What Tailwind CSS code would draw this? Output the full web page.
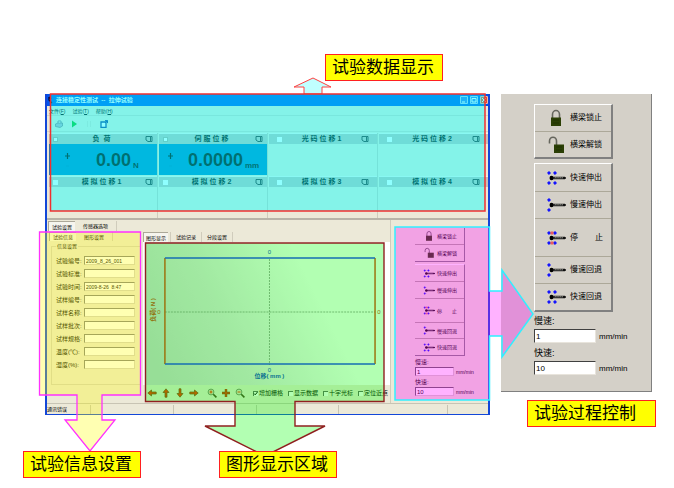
<!DOCTYPE html>
<html lang="zh-CN">
<head>
    <meta charset="UTF-8">
    <meta name="viewport" content="width=device-width, initial-scale=1.0">
    <title>拉伸试验</title>
    <script src="https://cdn.jsdelivr.net/npm/@tailwindcss/browser@4"></script>
</head>
<body class="bg-white text-black font-['Liberation_Sans','Noto_Sans_CJK_SC',sans-serif]">

    <!-- Shared icons -->
    <svg class="hidden" aria-hidden="true">
        <symbol id="lock" viewBox="0 0 20 18">
            <path d="M6.5 9V5.5a3.5 4 0 0 1 7 0V9" fill="none" stroke="#66665e" stroke-width="1.6"/>
            <rect x="5" y="8.5" width="10" height="8.5" fill="#2b3f05"/>
            <path d="M7 11h6M7 14h6" stroke="#1a2800" stroke-width=".6"/>
        </symbol>
        <symbol id="unlock" viewBox="0 0 20 18">
            <path d="M3.5 7.5V5a3.5 3.8 0 0 1 7 0v4" fill="none" stroke="#66665e" stroke-width="1.6"/>
            <rect x="8" y="8.5" width="10" height="8.5" fill="#2b3f05"/>
            <path d="M10 11h6M10 14h6" stroke="#1a2800" stroke-width=".6"/>
        </symbol>
        <symbol id="rod" viewBox="0 0 20 14">
            <path d="M6 7h13" stroke="#333" stroke-width="2.6"/>
            <path d="M9 6.6h8" stroke="#8a8a80" stroke-width=".8" stroke-dasharray="1.5 .8"/>
            <ellipse cx="5.5" cy="7" rx="2" ry="2.2" fill="#000"/>
            <path d="M17 7h3" stroke="#000" stroke-width="1.4"/>
        </symbol>
        <symbol id="slow" viewBox="0 0 20 14">
            <use href="#rod"/>
            <path d="M3 .3 4.7 2 3 3.7 1.3 2ZM3 10.3 4.7 12 3 13.7 1.3 12Z" fill="#1010ff" stroke="#1010ff" stroke-width=".5"/>
        </symbol>
        <symbol id="fast" viewBox="0 0 20 14">
            <use href="#slow"/>
            <path d="M9 .3 10.7 2 9 3.7 7.3 2ZM9 10.3 10.7 12 9 13.7 7.3 12Z" fill="#1010ff" stroke="#1010ff" stroke-width=".5"/>
        </symbol>
        <symbol id="stop" viewBox="0 0 20 14">
            <use href="#fast"/>
            <path d="M5.2 .5v3M6.8 .5v3M5.2 10.5v3M6.8 10.5v3" stroke="#f04040" stroke-width="1.2"/>
        </symbol>
        <symbol id="arrow" viewBox="0 0 10 10">
            <path d="M.8 5 4.5 2v2H9.2v2H4.5v2Z" fill="#ff2800" stroke="#803010" stroke-width=".7"/>
        </symbol>
        <symbol id="zoom" viewBox="0 0 10 10">
            <path d="m6 6 3.4 3.4" stroke="#4a3a20" stroke-width="1.6"/>
            <circle cx="4" cy="4" r="2.9" fill="#e8e0d0" stroke="#6a6a5a" stroke-width=".8"/>
        </symbol>
        <symbol id="copy" viewBox="0 0 8 8">
            <path d="M1 1.5h4.5v5H3L1 5ZM5.5 1.5H7v5H5.5" fill="none" stroke="#222" stroke-width=".9"/>
        </symbol>
    </svg>

    <main class="relative max-w-[674px] min-h-[488px]">
        <div class="flex items-start gap-[11px] pt-[94px] pl-[45px] pr-[22px]">

            <!-- Application window -->
            <section class="flex-1 min-w-0 bg-[#ece9d8] border-x-2 border-b border-[#1347d8] text-[5px] leading-[8px]">
                <header class="flex items-center h-3 bg-[#0054ed] text-white text-[6px] pl-px pr-0">
                    <svg class="w-2 h-2" viewBox="0 0 8 8"><path d="M1 1v3l3 3M1 1l2 2" stroke="#002" stroke-width="1.2" fill="none"/></svg>
                    <h1 class="flex-1 font-bold">连接稳定性测试 &nbsp;--&nbsp; 拉伸试验</h1>
                    <button aria-label="最小化" class="w-2 h-2 mr-[2px] rounded-[1px] border border-white/60 bg-[#3c78f0]"><svg viewBox="0 0 6 6"><path d="M1 5h3" stroke="#fff"/></svg></button>
                    <button aria-label="最大化" class="w-2 h-2 mr-[2px] rounded-[1px] border border-white/60 bg-[#3c78f0]"><svg viewBox="0 0 6 6"><path d="M1 1.5h4v3.5h-4z" fill="none" stroke="#fff"/></svg></button>
                    <button aria-label="关闭" class="w-2 h-2 rounded-[1px] border border-white/60 bg-[#e0502c]"><svg viewBox="0 0 6 6"><path d="m1 1 4 4M5 1 1 5" stroke="#fff"/></svg></button>
                </header>
                <nav class="flex items-center gap-[7px] h-[9px] pl-[2px]">
                    <a href="#">文件(<u>F</u>)</a>
                    <a href="#">试验(<u>T</u>)</a>
                    <a href="#">帮助(<u>H</u>)</a>
                </nav>
                <div class="flex items-center gap-[7px] h-[17px] pl-2 border-y border-[#d8d4c4]">
                    <button aria-label="打印"><svg class="w-2 h-2" viewBox="0 0 8 8"><path d="M3 3V1h3v2" fill="#fff" stroke="#889"/><path d="M.5 4 3 3h4.500v3L5 7.500.5 6.500z" fill="#b8b4c8" stroke="#667" stroke-width=".6"/></svg></button>
                    <button aria-label="开始"><svg class="w-2 h-2" viewBox="0 0 8 8"><path d="M2 .5 7 4 2 7.500Z" fill="#10c020"/></svg></button>
                    <button aria-label="暂停"><svg class="w-2 h-2" viewBox="0 0 8 8"><path d="M2.500 1v6M5.500 1v6" stroke="#dedac8"/></svg></button>
                    <button aria-label="新窗口"><svg class="w-2 h-2" viewBox="0 0 8 8"><path d="M1 2h5v5.300H1z" fill="#fff" stroke="#123a9a" stroke-width="1.300"/><path d="M5 3 7.500.6M5 .6h2.500v2.500" stroke="#123a9a" fill="none"/></svg></button>
                </div>

                <!-- Channel readouts -->
                <div class="grid grid-cols-4 gap-x-px pl-[2px] pt-px border-b-2 border-[#b8b4a8] bg-[#ece9d8]">
                    <article class="border-r border-[#d0ccbc]">
                        <div class="flex items-center h-[11px] px-1 bg-[#c6c0ba] border-t border-[#f4f2ea]">
                            <input type="checkbox" checked aria-label="负荷" class="appearance-none w-[5px] h-[5px] bg-white border border-[#b0aca0]">
                            <h2 class="flex-1 text-center text-[7px] leading-[10px] font-bold">负 &nbsp;荷</h2>
                            <svg class="w-2 h-2"><use href="#copy"/></svg>
                        </div>
                        <div class="flex items-center h-[31px] bg-[#0080c8] pl-4">
                            <svg class="w-[5px] h-5" viewBox="0 0 5 20"><path d="M0 6h5M2.500 3v6" stroke="#000" stroke-width="1.200"/><path d="M1 16h3" stroke="#0078b8"/></svg>
                            <p class="flex-1 text-right text-[18px] leading-[28px] font-bold">0.00</p>
                            <span class="w-[26px] pl-[2px] pt-3 text-[8px] font-bold">N</span>
                        </div>
                    </article>
                    <article class="border-r border-[#d0ccbc]">
                        <div class="flex items-center h-[11px] px-1 bg-[#c6c0ba] border-t border-[#f4f2ea]">
                            <input type="checkbox" checked aria-label="伺服位移" class="appearance-none w-[5px] h-[5px] bg-white border border-[#b0aca0]">
                            <h2 class="flex-1 text-center text-[7px] leading-[10px] font-bold">伺 服 位 移</h2>
                            <svg class="w-2 h-2"><use href="#copy"/></svg>
                        </div>
                        <div class="flex items-center h-[31px] bg-[#0080c8] pl-[9px]">
                            <svg class="w-[5px] h-5" viewBox="0 0 5 20"><path d="M0 6h5M2.500 3v6" stroke="#000" stroke-width="1.200"/><path d="M1 16h3" stroke="#0078b8"/></svg>
                            <p class="flex-1 text-right text-[18px] leading-[28px] font-bold">0.0000</p>
                            <span class="w-[24px] pl-[2px] pt-3 text-[8px] font-bold">mm</span>
                        </div>
                    </article>
                    <article class="border-r border-[#d0ccbc]">
                        <div class="flex items-center h-[11px] px-2 bg-[#c6c0ba] border-t border-[#f4f2ea]">
                            <input type="checkbox" aria-label="光码位移1" class="appearance-none w-[5px] h-[5px] bg-white">
                            <h2 class="flex-1 text-center text-[7px] leading-[10px] font-bold">光 码 位 移 1</h2>
                            <svg class="w-2 h-2"><use href="#copy"/></svg>
                        </div>
                    </article>
                    <article>
                        <div class="flex items-center h-[11px] px-2 bg-[#c6c0ba] border-t border-[#f4f2ea]">
                            <input type="checkbox" aria-label="光码位移2" class="appearance-none w-[5px] h-[5px] bg-white">
                            <h2 class="flex-1 text-center text-[7px] leading-[10px] font-bold">光 码 位 移 2</h2>
                            <svg class="w-2 h-2"><use href="#copy"/></svg>
                        </div>
                    </article>
                    <article class="h-[43px] pt-px border-r border-[#d0ccbc]">
                        <div class="flex items-center h-[11px] px-1 bg-[#c6c0ba] border-t border-[#f4f2ea]">
                            <input type="checkbox" aria-label="模拟位移1" class="appearance-none w-[5px] h-[5px] bg-white">
                            <h2 class="flex-1 text-center text-[7px] leading-[10px] font-bold">模 拟 位 移 1</h2>
                            <svg class="w-2 h-2"><use href="#copy"/></svg>
                        </div>
                    </article>
                    <article class="h-[43px] pt-px border-r border-[#d0ccbc]">
                        <div class="flex items-center h-[11px] px-1 bg-[#c6c0ba] border-t border-[#f4f2ea]">
                            <input type="checkbox" aria-label="模拟位移2" class="appearance-none w-[5px] h-[5px] bg-white">
                            <h2 class="flex-1 text-center text-[7px] leading-[10px] font-bold">模 拟 位 移 2</h2>
                            <svg class="w-2 h-2"><use href="#copy"/></svg>
                        </div>
                    </article>
                    <article class="h-[43px] pt-px border-r border-[#d0ccbc]">
                        <div class="flex items-center h-[11px] px-2 bg-[#c6c0ba] border-t border-[#f4f2ea]">
                            <input type="checkbox" aria-label="模拟位移3" class="appearance-none w-[5px] h-[5px] bg-white">
                            <h2 class="flex-1 text-center text-[7px] leading-[10px] font-bold">模 拟 位 移 3</h2>
                            <svg class="w-2 h-2"><use href="#copy"/></svg>
                        </div>
                    </article>
                    <article class="h-[43px] pt-px">
                        <div class="flex items-center h-[11px] px-2 bg-[#c6c0ba] border-t border-[#f4f2ea]">
                            <input type="checkbox" aria-label="模拟位移4" class="appearance-none w-[5px] h-[5px] bg-white">
                            <h2 class="flex-1 text-center text-[7px] leading-[10px] font-bold">模 拟 位 移 4</h2>
                            <svg class="w-2 h-2"><use href="#copy"/></svg>
                        </div>
                    </article>
                </div>

                <div class="flex h-[183px]">
                    <div class="flex-1 min-w-0">
                        <nav class="flex h-[11px] pl-px pt-px">
                            <button class="px-[3px] bg-[#f6f5ee] border-l border-t border-[#aca899]">试验设置</button>
                            <button class="px-2 border-r border-[#d0ccbc]">传感器选项</button>
                        </nav>
                        <div class="flex h-[172px]">
                            <!-- Test information -->
                            <form class="w-[96px] pl-[2px]">
                                <nav class="flex h-[10px] pt-px">
                                    <button type="button" class="px-[3px] bg-[#f6f5ee] border-l border-t border-[#aca899]">试验信息</button>
                                    <button type="button" class="px-2 border-r border-[#d0ccbc]">图形设置</button>
                                </nav>
                                <fieldset class="mx-[2px] mt-px h-[143px] border border-[#d4d0c0] px-1 text-[6px]">
                                    <legend class="px-px text-[5px] leading-[8px]">信息设置</legend>
                                    <div class="grid grid-cols-[28px_1fr] auto-rows-[9px] gap-y-[4px] items-center pt-[6px] pr-px whitespace-nowrap">
                                        <label for="no">试验编号:</label>
                                        <input id="no" value="2009_8_26_001" class="w-full h-[9px] px-px text-[5px] bg-white border border-[#d4d0c8] border-t-[#808080] border-l-[#808080]">
                                        <label for="std">试验标准:</label>
                                        <input id="std" class="w-full h-[9px] px-px text-[5px] bg-white border border-[#d4d0c8] border-t-[#808080] border-l-[#808080]">
                                        <label for="time">试验时间:</label>
                                        <input id="time" value="2009-8-26  8:47" class="w-full h-[9px] px-px text-[5px] bg-white border border-[#d4d0c8] border-t-[#808080] border-l-[#808080]">
                                        <label for="sno">试样编号:</label>
                                        <input id="sno" class="w-full h-[9px] px-px text-[5px] bg-white border border-[#d4d0c8] border-t-[#808080] border-l-[#808080]">
                                        <label for="name">试样名称:</label>
                                        <input id="name" class="w-full h-[9px] px-px text-[5px] bg-white border border-[#d4d0c8] border-t-[#808080] border-l-[#808080]">
                                        <label for="batch">试样批次:</label>
                                        <input id="batch" class="w-full h-[9px] px-px text-[5px] bg-white border border-[#d4d0c8] border-t-[#808080] border-l-[#808080]">
                                        <label for="spec">试样规格:</label>
                                        <input id="spec" class="w-full h-[9px] px-px text-[5px] bg-white border border-[#d4d0c8] border-t-[#808080] border-l-[#808080]">
                                        <label for="temp">温度(℃):</label>
                                        <input id="temp" class="w-full h-[9px] px-px text-[5px] bg-white border border-[#d4d0c8] border-t-[#808080] border-l-[#808080]">
                                        <label for="hum">湿度(%):</label>
                                        <input id="hum" class="w-full h-[9px] px-px text-[5px] bg-white border border-[#d4d0c8] border-t-[#808080] border-l-[#808080]">
                                    </div>
                                </fieldset>
                            </form>

                            <!-- Chart -->
                            <section class="flex-1 min-w-0 flex flex-col pb-[2px]">
                                <nav class="flex h-[11px] pt-px">
                                    <button class="px-[2px] bg-[#f6f5ee] border-l border-t border-[#aca899]">图形显示</button>
                                    <button class="px-[5px] border-x border-[#d0ccbc] ml-[2px]">试验记录</button>
                                    <button class="px-[5px] border-r border-[#d0ccbc]">分段设置</button>
                                </nav>
                                <div class="flex-1 pr-1 bg-white">
                                    <svg class="w-full h-[143px]" viewBox="0 0 244 143" preserveAspectRatio="none">
                                        <defs>
                                            <linearGradient id="shade" x1="0" y1=".7" x2="1" y2=".4">
                                                <stop offset="0" stop-color="#d8d0d8"/>
                                                <stop offset=".35" stop-color="#e8e0e8"/>
                                                <stop offset=".75" stop-color="#ffffff"/>
                                            </linearGradient>
                                        </defs>
                                        <rect x="2" width="239" height="143" fill="url(#shade)"/>
                                        <path d="M127 17v106M22 70h211" stroke="#888" stroke-width=".8" stroke-dasharray="2 1"/>
                                        <path d="M22 16v106M233 16v106" stroke="#e03818" stroke-width="1.500"/>
                                        <path d="M22 16h211M22 122h211" stroke="#2030ff" stroke-width="1.500"/>
                                        <g font-size="6" text-anchor="middle" fill="#1030d0">
                                            <text x="127" y="12">0</text>
                                            <text x="127" y="130">0</text>
                                            <text x="127" y="136" font-weight="bold">位移( mm )</text>
                                            <g fill="#d03010">
                                                <text x="16" y="72">0</text>
                                                <text x="237" y="72">0</text>
                                                <text transform="translate(12 68) rotate(-90)" font-weight="bold">负荷( N )</text>
                                            </g>
                                        </g>
                                    </svg>
                                </div>
                                <div class="flex items-center h-4 pl-1 bg-[#ece9d8] whitespace-nowrap text-[6px]">
                                    <div class="flex items-center gap-1">
                                        <button aria-label="左移"><svg class="w-[10px] h-[10px]"><use href="#arrow"/></svg></button>
                                        <button aria-label="上移"><svg class="w-[10px] h-[10px] rotate-90"><use href="#arrow"/></svg></button>
                                        <button aria-label="下移"><svg class="w-[10px] h-[10px] -rotate-90"><use href="#arrow"/></svg></button>
                                        <button aria-label="右移"><svg class="w-[10px] h-[10px] rotate-180"><use href="#arrow"/></svg></button>
                                    </div>
                                    <div class="flex items-center gap-1 ml-2">
                                        <button aria-label="放大"><svg class="w-[10px] h-[10px]" viewBox="0 0 10 10"><use href="#zoom"/><path d="M2.500 4h3M4 2.500v3" stroke="#ff2800" stroke-width="1.200"/></svg></button>
                                        <button aria-label="居中"><svg class="w-[10px] h-[10px]" viewBox="0 0 10 10"><path d="M1 5h8M5 1v8" stroke="#803010" stroke-width="2.400"/><path d="M1 5h8M5 1v8" stroke="#ff2800" stroke-width="1.200"/></svg></button>
                                        <button aria-label="缩小"><svg class="w-[10px] h-[10px]" viewBox="0 0 10 10"><use href="#zoom"/><path d="M2.500 4h3" stroke="#ff2800"/></svg></button>
                                    </div>
                                    <div class="flex items-center gap-[5px] ml-2">
                                        <label class="flex items-center gap-px"><span class="relative flex"><input type="checkbox" checked class="appearance-none w-[5px] h-[5px] bg-white border-t border-l border-[#606060]"><svg class="absolute inset-0 w-[5px] h-[5px] pointer-events-none" viewBox="0 0 5 5"><path d="m1 2.500 1.200 1.300L4.500 1" fill="none" stroke="#000"/></svg></span>增加栅格</label>
                                        <label class="flex items-center gap-px"><input type="checkbox" class="appearance-none w-[5px] h-[5px] bg-white border-t border-l border-[#606060]">显示数据</label>
                                        <label class="flex items-center gap-px"><input type="checkbox" class="appearance-none w-[5px] h-[5px] bg-white border-t border-l border-[#606060]">十字光标</label>
                                        <label class="flex items-center gap-px"><input type="checkbox" class="appearance-none w-[5px] h-[5px] bg-white border-t border-l border-[#606060]">定位近点</label>
                                    </div>
                                </div>
                            </section>
                        </div>
                    </div>

                    <!-- Process control -->
                    <section class="w-[98px] pl-6 pt-2 border-l border-[#d0ccbc]">
                        <div class="w-[50px] border-r border-b border-[#808080]">
                            <button class="flex items-center gap-[2px] w-full h-[16px] pl-2"><svg class="w-3 h-3"><use href="#lock"/></svg>横梁锁止</button>
                            <button class="flex items-center gap-[2px] w-full h-[17px] pl-2 border-t border-[#aca899]"><svg class="w-3 h-3"><use href="#unlock"/></svg>横梁解锁</button>
                        </div>
                        <div class="w-[50px] mt-[2px] border-r border-b border-t border-[#808080] border-t-white">
                            <button class="flex items-center gap-[2px] w-full h-[16px] pl-2"><svg class="w-3 h-[9px]"><use href="#fast"/></svg>快速伸出</button>
                            <button class="flex items-center gap-[2px] w-full h-[17px] pl-2 border-t border-[#aca899]"><svg class="w-3 h-[9px]"><use href="#slow"/></svg>慢速伸出</button>
                            <button class="flex items-center gap-[2px] w-full h-[24px] pl-2 border-t border-[#aca899]"><svg class="w-3 h-[9px]"><use href="#stop"/></svg><span class="flex justify-between w-5"><span>停</span><span>止</span></span></button>
                            <button class="flex items-center gap-[2px] w-full h-[16px] pl-2 border-t border-[#aca899]"><svg class="w-3 h-[9px]"><use href="#slow"/></svg>慢速回退</button>
                            <button class="flex items-center gap-[2px] w-full h-[17px] pl-2 border-t border-[#aca899]"><svg class="w-3 h-[9px]"><use href="#fast"/></svg>快速回退</button>
                        </div>
                        <label for="slow-small" class="block mt-px text-[6px] leading-[10px]">慢速:</label>
                        <div class="flex items-end gap-[2px]"><input id="slow-small" value="1" class="w-[39px] h-[9px] px-px text-[6px] bg-white border border-[#d4d0c8] border-t-[#606060] border-l-[#606060]">mm/min</div>
                        <label for="fast-small" class="block mt-px text-[6px] leading-[10px]">快速:</label>
                        <div class="flex items-end gap-[2px]"><input id="fast-small" value="10" class="w-[39px] h-[9px] px-px text-[6px] bg-white border border-[#d4d0c8] border-t-[#606060] border-l-[#606060]">mm/min</div>
                    </section>
                </div>

                <footer class="grid grid-cols-[44px_83fr_83fr_83fr_109fr_40px] h-[11px] pt-px border-t border-[#c8c4b4] leading-[9px]">
                    <span class="border-r border-[#c8c4b4]">通讯错误</span>
                    <span class="border-r border-[#c8c4b4]"></span>
                    <span class="border-r border-[#c8c4b4]"></span>
                    <span class="border-r border-[#c8c4b4]"></span>
                    <span class="border-r border-[#c8c4b4]"></span>
                </footer>
            </section>

            <!-- Enlarged process control -->
            <aside class="w-[151px] min-h-[298px] pt-[10px] pl-[33px] bg-[#d4d0c8] border-r border-b border-[#808080] text-[8px] leading-[12px]">
                <div class="w-[79px] border-t border-l border-r-2 border-b-2 border-white border-r-[#808080] border-b-[#808080]">
                    <button class="flex items-center gap-1 w-full h-[26px] pl-[11px]"><svg class="w-5 h-[18px]"><use href="#lock"/></svg>横梁锁止</button>
                    <button class="flex items-center gap-1 w-full h-[26px] pl-[11px] border-t border-[#aca899]"><svg class="w-5 h-[18px]"><use href="#unlock"/></svg>横梁解锁</button>
                </div>
                <div class="w-[79px] mt-1 border-t border-l border-r-2 border-b-2 border-white border-r-[#808080] border-b-[#808080]">
                    <button class="flex items-center gap-1 w-full h-[27px] pl-[11px]"><svg class="w-5 h-[14px]"><use href="#fast"/></svg>快速伸出</button>
                    <button class="flex items-center gap-1 w-full h-[27px] pl-[11px] border-t border-[#aca899]"><svg class="w-5 h-[14px]"><use href="#slow"/></svg>慢速伸出</button>
                    <button class="flex items-center gap-1 w-full h-[38px] pl-[11px] border-t border-[#aca899]"><svg class="w-5 h-[14px]"><use href="#stop"/></svg><span class="flex justify-between w-[33px]"><span>停</span><span>止</span></span></button>
                    <button class="flex items-center gap-1 w-full h-[27px] pl-[11px] border-t border-[#aca899]"><svg class="w-5 h-[14px]"><use href="#slow"/></svg>慢速回退</button>
                    <button class="flex items-center gap-1 w-full h-[27px] pl-[11px] border-t border-[#aca899]"><svg class="w-5 h-[14px]"><use href="#fast"/></svg>快速回退</button>
                </div>
                <label for="slow-speed" class="block mt-px text-[9px] leading-4">慢速:</label>
                <div class="flex items-end gap-[3px]"><input id="slow-speed" value="1" class="w-[62px] h-[14px] px-px text-[8px] bg-white border border-[#e8e4dc] border-t-[#404040] border-l-[#404040]"><span class="leading-[12px]">mm/min</span></div>
                <label for="fast-speed" class="block mt-[2px] text-[9px] leading-4">快速:</label>
                <div class="flex items-end gap-[3px]"><input id="fast-speed" value="10" class="w-[62px] h-[14px] px-px text-[8px] bg-white border border-[#e8e4dc] border-t-[#404040] border-l-[#404040]"><span class="leading-[12px]">mm/min</span></div>
            </aside>
        </div>

        <!-- Translucent region callouts -->
        <svg class="absolute inset-0 w-full h-full pointer-events-none" viewBox="0 0 674 488" preserveAspectRatio="none" aria-hidden="true">
            <path d="M304 94V87H294L313 78L331 87H322V94Z" fill="#c0ffff" stroke="#ff4040"/>
            <rect x="50.500" y="94" width="434.500" height="117" fill="#00ffff" fill-opacity=".44" stroke="#f03030" stroke-width="1.500"/>
            <path d="M39.500 232H140.500V395H102V420H115L90 451L65 420H77V395H39.500Z" fill="#ffff00" fill-opacity=".3" stroke="#ff30ff" stroke-width="1.300"/>
            <path d="M145.500 243H384V401.500H295V426H325L265 456L205 426H235V401.500H145.500Z" fill="#00ff00" fill-opacity=".3" stroke="#902020" stroke-width="1.400"/>
            <path d="M395 227H489.500V291H502V270L533 314L502 357V336H489.500V400H395Z" fill="#ff00ff" fill-opacity=".3" stroke="#30f0ff" stroke-width="1.500"/>
        </svg>

        <p class="absolute left-[325px] top-[54px] w-[118px] h-[27px] pl-[6px] bg-[#ffff00] border border-[#ff2020] text-[17px] leading-[25px] whitespace-nowrap">试验数据显示</p>
        <p class="absolute left-[23px] top-[451px] w-[118px] h-[27px] pl-[6px] bg-[#ffff00] border border-[#ff2020] text-[17px] leading-[25px] whitespace-nowrap">试验信息设置</p>
        <p class="absolute left-[219px] top-[451px] w-[118px] h-[27px] pl-[6px] bg-[#ffff00] border border-[#ff2020] text-[17px] leading-[25px] whitespace-nowrap">图形显示区域</p>
        <p class="absolute left-[527px] top-[400px] w-[129px] h-[27px] pl-[6px] bg-[#ffff00] border border-[#ff2020] text-[17px] leading-[25px] whitespace-nowrap">试验过程控制</p>
    </main>
</body>
</html>
